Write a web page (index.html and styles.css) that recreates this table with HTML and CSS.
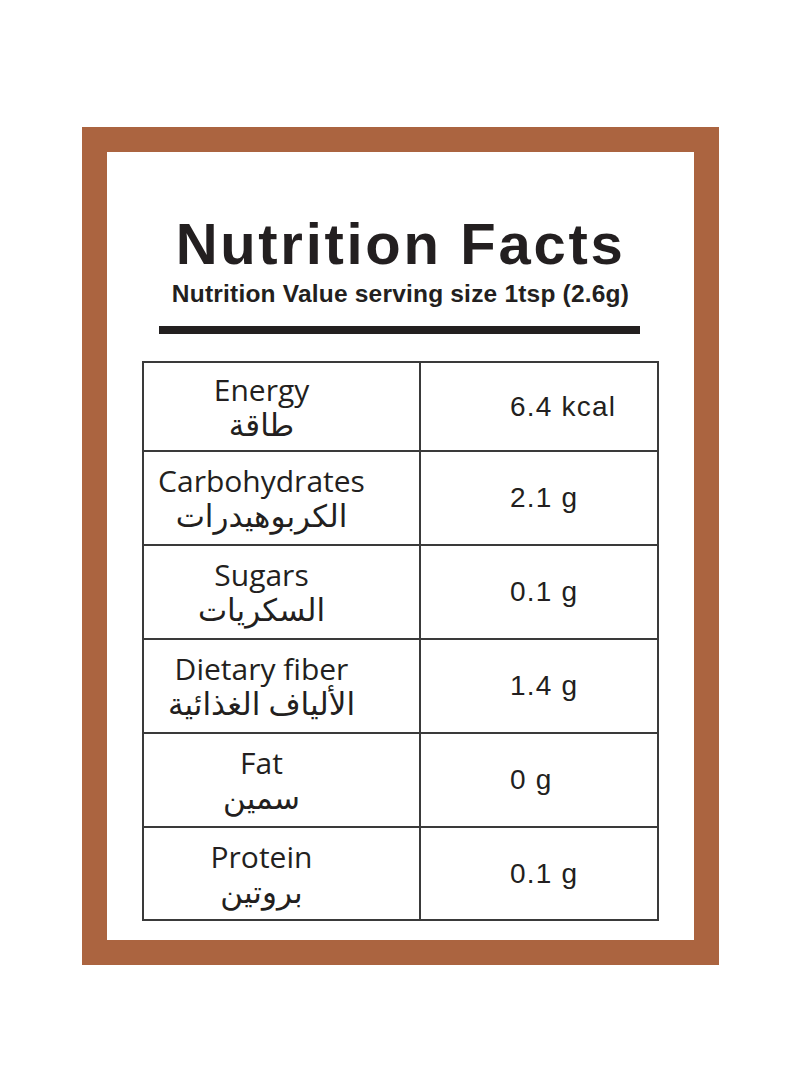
FILE: index.html
```html
<!DOCTYPE html>
<html lang="en">
<head>
<meta charset="utf-8">
<title>Nutrition Facts</title>
<link rel="stylesheet" href="styles.css">
</head>
<body>
<div class="frame">
  <div class="panel">
    <h1 class="title">Nutrition Facts</h1>
    <p class="subtitle">Nutrition Value serving size 1tsp (2.6g)</p>
    <div class="rule"></div>
    <table class="facts">
      <colgroup><col class="c-name"><col class="c-val"></colgroup>
      <tr class="r1"><td class="name"><span class="en">Energy</span><span class="ar" lang="ar">طاقة</span></td><td class="val">6.4 kcal</td></tr>
      <tr><td class="name"><span class="en">Carbohydrates</span><span class="ar" lang="ar">الكربوهيدرات</span></td><td class="val">2.1 g</td></tr>
      <tr><td class="name"><span class="en">Sugars</span><span class="ar" lang="ar">السكريات</span></td><td class="val">0.1 g</td></tr>
      <tr><td class="name"><span class="en">Dietary fiber</span><span class="ar" lang="ar">الألياف الغذائية</span></td><td class="val">1.4 g</td></tr>
      <tr><td class="name"><span class="en">Fat</span><span class="ar bold" lang="ar">سمين</span></td><td class="val">0 g</td></tr>
      <tr class="rl"><td class="name"><span class="en">Protein</span><span class="ar bold" lang="ar">بروتين</span></td><td class="val">0.1 g</td></tr>
    </table>
  </div>
</div>
</body>
</html>
```
FILE: styles.css
```css
html, body {
  margin: 0;
  padding: 0;
  background: #ffffff;
}
.frame {
  box-sizing: border-box;
  width: 637px;
  height: 838px;
  margin: 127px 0 0 82px;
  border: 25px solid #ab6440;
  background: #ffffff;
}
.panel {
  display: flex;
  flex-direction: column;
  align-items: center;
  padding-top: 58px;
}
.title {
  margin: 0;
  font-family: "Liberation Sans", Arial, sans-serif;
  font-weight: 700;
  font-size: 58px;
  line-height: 68px;
  color: #231f20;
  letter-spacing: 2.7px;
}
.subtitle {
  margin: 2px 0 0;
  font-family: "Liberation Sans", Arial, sans-serif;
  font-weight: 700;
  font-size: 24.5px;
  line-height: 28px;
  color: #231f20;
  letter-spacing: 0.2px;
}
.rule {
  width: 481px;
  height: 8px;
  margin-top: 18px;
  margin-left: -2px;
  background: #231f20;
}
.facts {
  margin-top: 27px;
  width: 515px;
  table-layout: fixed;
  border-collapse: collapse;
  color: #231f20;
}
.c-name {
  width: 277px;
}
.c-val {
  width: 238px;
}
.facts td {
  border: 2px solid #3a3a3a;
  padding: 0;
  vertical-align: middle;
}
.facts tr {
  height: 94px;
}
.facts tr.r1 {
  height: 89px;
}
.facts tr.rl {
  height: 93px;
}
.facts td.name {
  text-align: center;
  padding-right: 40px;
}
.en {
  display: block;
  font-family: "Open Sans", "Noto Sans", sans-serif;
  font-size: 30px;
  line-height: 34px;
}
.ar {
  display: block;
  font-family: "Noto Sans", "DejaVu Sans", sans-serif;
  font-size: 31px;
  line-height: 34px;
}
.ar.bold {
  font-weight: 500;
}
.facts td.val {
  padding-left: 89px;
  font-family: "Liberation Sans", Arial, sans-serif;
  font-size: 28px;
  line-height: 32px;
  letter-spacing: 1.2px;
}
```
